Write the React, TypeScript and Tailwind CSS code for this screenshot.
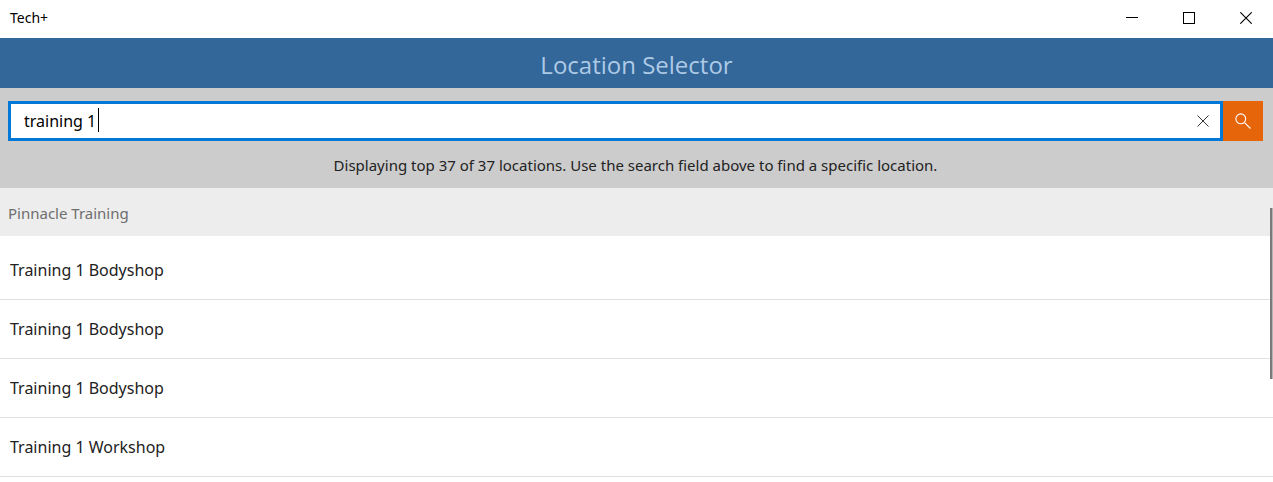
import { useState } from 'react';

const LOCATIONS: { id: number; name: string }[] = [
  { id: 1, name: 'Training 1 Bodyshop' },
  { id: 2, name: 'Training 1 Bodyshop' },
  { id: 3, name: 'Training 1 Bodyshop' },
  { id: 4, name: 'Training 1 Workshop' },
];

export default function App() {
  return (
    <div className="relative bg-white font-['Segoe_UI','Noto_Sans',sans-serif] text-black">
      <TitleBar />
      <h1 className="flex h-[50px] items-center justify-center bg-[#336699] pt-1 font-['Segoe_UI','Open_Sans',sans-serif] text-2xl text-[#adcae6]">
        Location Selector
      </h1>
      <SearchPanel />
      <section aria-labelledby="group">
        <h2 id="group" className="flex h-12 items-center bg-[#ededed] px-2 pt-0.5 text-[15px] text-[#6e6e6e]">
          Pinnacle Training
        </h2>
        <ul className="pt-[5px]">
          {LOCATIONS.map((l) => (
            <li key={l.id} className="border-b border-[#e1e1e1]">
              <button type="button" className="h-[58px] w-full px-2.5 text-left text-base text-[#222222]">
                {l.name}
              </button>
            </li>
          ))}
        </ul>
      </section>
      {/* thin scroll indicator */}
      <div className="absolute top-[208px] right-0 h-[171px] w-[3px] border-r border-[#b4b4b4] bg-[#7a7a7a]" />
    </div>
  );
}

function TitleBar() {
  return (
    <header className="flex h-[38px] items-start justify-between pl-2.5">
      <span className="text-sm leading-9">Tech+</span>
      <div className="flex h-9 gap-[3px]">
        <button type="button" aria-label="Minimize" className="grid w-[54px] place-items-center">
          <svg width="12" height="12" viewBox="0 0 12 12" stroke="currentColor" shapeRendering="crispEdges">
            <path d="M0 5.5h12" />
          </svg>
        </button>
        <button type="button" aria-label="Maximize" className="grid w-[54px] place-items-center">
          <svg width="12" height="12" viewBox="0 0 12 12" fill="none" stroke="currentColor" shapeRendering="crispEdges">
            <path d="M.5.5h11v11H.5z" />
          </svg>
        </button>
        <button type="button" aria-label="Close" className="grid w-[54px] place-items-center">
          <svg width="12" height="12" viewBox="0 0 12 12" stroke="currentColor" strokeWidth="1.1">
            <path d="M.3.3l11.4 11.4M11.7.3L.3 11.7" />
          </svg>
        </button>
      </div>
    </header>
  );
}

function SearchPanel() {
  const [query, setQuery] = useState('training 1');

  return (
    <div className="h-[100px] bg-[#cccccc] pt-[13px] pr-2.5 pl-2">
      <form role="search" className="flex h-10" onSubmit={(e) => e.preventDefault()}>
        <div className="relative flex flex-1 border-[3px] border-[#0078d7] bg-white">
          <input
            type="text"
            aria-label="Search locations"
            value={query}
            onChange={(e) => setQuery(e.target.value)}
            className="min-w-0 flex-1 px-[13px] text-base caret-transparent outline-none"
          />
          <span className="absolute top-1 left-[87px] h-6 w-px bg-black" />
          <button
            type="button"
            aria-label="Clear"
            onClick={() => setQuery('')}
            className="grid w-[34px] place-items-center text-[#333333]"
          >
            <svg width="12" height="12" viewBox="0 0 12 12" stroke="currentColor">
              <path d="M.5.5l11 11M11.5.5l-11 11" />
            </svg>
          </button>
        </div>
        <button type="submit" aria-label="Search" className="grid w-10 place-items-center bg-[#e6640a] text-white">
          <svg width="16" height="16" viewBox="0 0 16 16" fill="none" stroke="currentColor" strokeWidth="1.1">
            <circle cx="5.8" cy="5.8" r="4.9" />
            <path d="M9.3 9.3l6.2 6.2" />
          </svg>
        </button>
      </form>
      <p className="pt-3 text-center text-[15px] leading-6 text-[#222222]">
        Displaying top 37 of 37 locations. Use the search field above to find a specific location.
      </p>
    </div>
  );
}
